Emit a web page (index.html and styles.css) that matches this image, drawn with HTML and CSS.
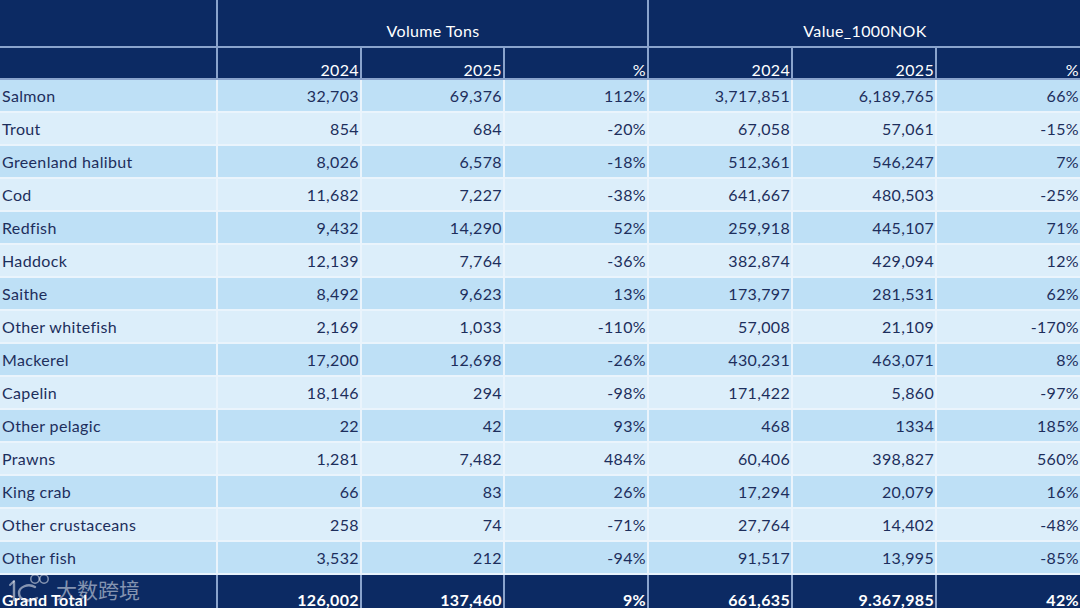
FILE: index.html
```html
<!DOCTYPE html>
<html lang="en">
<head>
<meta charset="utf-8">
<title>Seafood exports</title>
<link rel="stylesheet" href="styles.css">
</head>
<body>
<div class="wrap">
<table class="data">
  <colgroup>
    <col class="c-label"><col class="c-num"><col class="c-num2"><col class="c-num"><col class="c-num"><col class="c-num"><col class="c-num2">
  </colgroup>
  <thead>
    <tr class="h1">
      <th class="blank"></th>
      <th colspan="3" class="group">Volume Tons</th>
      <th colspan="3" class="group last">Value_1000NOK</th>
    </tr>
    <tr class="h2">
      <th class="blank"></th>
      <th>2024</th><th>2025</th><th>%</th>
      <th>2024</th><th>2025</th><th class="last">%</th>
    </tr>
  </thead>
  <tbody>
    <tr class="odd"><td>Salmon</td><td>32,703</td><td>69,376</td><td>112%</td><td>3,717,851</td><td>6,189,765</td><td class="last">66%</td></tr>
    <tr class="even"><td>Trout</td><td>854</td><td>684</td><td>-20%</td><td>67,058</td><td>57,061</td><td class="last">-15%</td></tr>
    <tr class="odd"><td>Greenland halibut</td><td>8,026</td><td>6,578</td><td>-18%</td><td>512,361</td><td>546,247</td><td class="last">7%</td></tr>
    <tr class="even"><td>Cod</td><td>11,682</td><td>7,227</td><td>-38%</td><td>641,667</td><td>480,503</td><td class="last">-25%</td></tr>
    <tr class="odd"><td>Redfish</td><td>9,432</td><td>14,290</td><td>52%</td><td>259,918</td><td>445,107</td><td class="last">71%</td></tr>
    <tr class="even"><td>Haddock</td><td>12,139</td><td>7,764</td><td>-36%</td><td>382,874</td><td>429,094</td><td class="last">12%</td></tr>
    <tr class="odd"><td>Saithe</td><td>8,492</td><td>9,623</td><td>13%</td><td>173,797</td><td>281,531</td><td class="last">62%</td></tr>
    <tr class="even"><td>Other whitefish</td><td>2,169</td><td>1,033</td><td>-110%</td><td>57,008</td><td>21,109</td><td class="last">-170%</td></tr>
    <tr class="odd"><td>Mackerel</td><td>17,200</td><td>12,698</td><td>-26%</td><td>430,231</td><td>463,071</td><td class="last">8%</td></tr>
    <tr class="even"><td>Capelin</td><td>18,146</td><td>294</td><td>-98%</td><td>171,422</td><td>5,860</td><td class="last">-97%</td></tr>
    <tr class="odd"><td>Other pelagic</td><td>22</td><td>42</td><td>93%</td><td>468</td><td>1334</td><td class="last">185%</td></tr>
    <tr class="even"><td>Prawns</td><td>1,281</td><td>7,482</td><td>484%</td><td>60,406</td><td>398,827</td><td class="last">560%</td></tr>
    <tr class="odd"><td>King crab</td><td>66</td><td>83</td><td>26%</td><td>17,294</td><td>20,079</td><td class="last">16%</td></tr>
    <tr class="even"><td>Other crustaceans</td><td>258</td><td>74</td><td>-71%</td><td>27,764</td><td>14,402</td><td class="last">-48%</td></tr>
    <tr class="odd"><td>Other fish</td><td>3,532</td><td>212</td><td>-94%</td><td>91,517</td><td>13,995</td><td class="last">-85%</td></tr>
  </tbody>
  <tfoot>
    <tr class="total"><td>Grand Total</td><td>126,002</td><td>137,460</td><td>9%</td><td>661,635</td><td>9.367,985</td><td class="last">42%</td></tr>
  </tfoot>
</table>
<div class="watermark">
  <svg class="wm-logo" width="44" height="30" viewBox="0 0 44 30" aria-hidden="true">
    <path d="M6 9 L6 27" fill="none" stroke="currentColor" stroke-width="2.4" stroke-linecap="round"/>
    <path d="M2 12 L6 8" fill="none" stroke="currentColor" stroke-width="2" stroke-linecap="round"/>
    <path d="M27 14 C20 10 11 14 11 20 C11 27 21 30 29 25" fill="none" stroke="currentColor" stroke-width="2.4" stroke-linecap="round"/>
    <circle cx="27" cy="6" r="4.2" fill="none" stroke="currentColor" stroke-width="1.5"/>
    <circle cx="36" cy="6" r="4.2" fill="none" stroke="currentColor" stroke-width="1.5"/>
  </svg>
  <span class="wm-text">大数跨境</span>
</div>
</div>
</body>
</html>
```

FILE: styles.css
```css
html, body {
  margin: 0;
  padding: 0;
  background: #0c2a63;
}
.wrap {
  position: relative;
  width: 1080px;
  height: 608px;
  overflow: hidden;
}
.data {
  width: 1080px;
  table-layout: fixed;
  border-collapse: separate;
  border-spacing: 0;
  font-family: "Lato", "Noto Sans", sans-serif;
  font-size: 16px;
  letter-spacing: 0.35px;
  font-variant-numeric: tabular-nums;
  font-feature-settings: "tnum" 1;
  color: #1d2e5c;
}
.c-label { width: 218px; }
.c-num { width: 144px; }
.c-num2 { width: 143px; }

.data th, .data td {
  padding: 0 1px 0 2px;
  text-align: right;
  white-space: nowrap;
  overflow: hidden;
  line-height: 18px;
  border-right: 2px solid #eaf4fc;
  border-bottom: 2px solid #eaf4fc;
}
.data td:first-child { text-align: left; }
.data .last { border-right: 0; }

thead th {
  background: #0c2a63;
  color: #ffffff;
  font-weight: 400;
  border-color: #8aa3cc !important;
}
.h1 { height: 48px; }
.h1 th { vertical-align: middle; padding-top: 16px; }
.h1 th.group { text-align: center; }
.h2 { height: 32px; }
.h2 th { vertical-align: bottom; padding-bottom: 0; line-height: 17px; }

tbody tr { height: 33px; }
tbody td { vertical-align: middle; padding-top: 5px; }
tbody tr.odd td { background: #bee0f6; }
tbody tr.even td { background: #dceefa; }

.total { height: 33px; }
.total td {
  background: #0c2a63;
  color: #ffffff;
  font-weight: 700;
  vertical-align: bottom;
  border-bottom: 0;
  border-right-color: #8aa3cc;
  line-height: 16px;
  padding-bottom: 0;
}

.watermark {
  position: absolute;
  left: 8px;
  top: 573px;
  display: flex;
  align-items: center;
  gap: 4px;
  color: rgba(255, 255, 255, 0.5);
  pointer-events: none;
}
.wm-text {
  font-family: "Noto Sans CJK SC", sans-serif;
  font-size: 21px;
  line-height: 28px;
  padding-top: 2px;
}
```
